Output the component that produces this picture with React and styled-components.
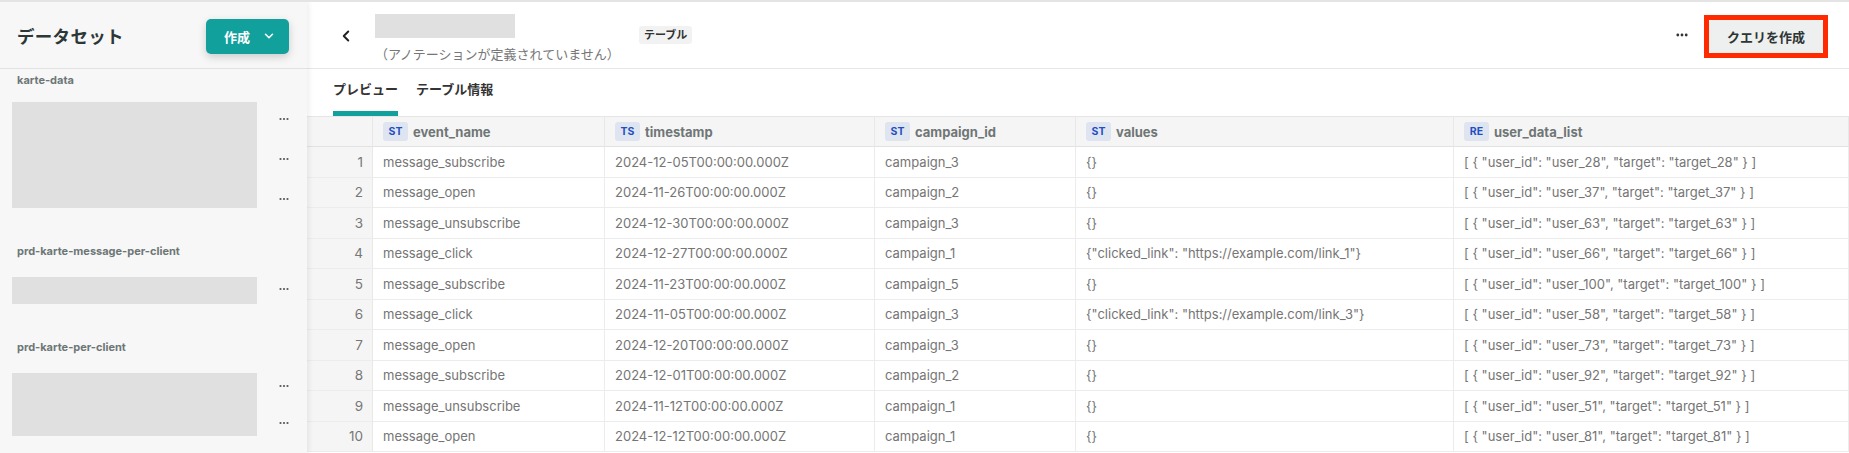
import React from "react";
import styled, { createGlobalStyle } from "styled-components";
import { ChevronLeft, ChevronDown } from "lucide-react";

const Global = createGlobalStyle`
  html, body { margin: 0; padding: 0; background: #fff; }
  body { font-family: Inter, "Noto Sans CJK JP", sans-serif; }
  * { box-sizing: border-box; }
`;

const Shell = styled.div`
  display: flex;
  width: 1849px;
  height: 453px;
  overflow: hidden;
  border-top: 2px solid #e4e4e4;
`;

const Sidebar = styled.aside`
  width: 307px;
  flex: none;
  background: #f7f7f7;
  box-shadow: 2px 0 5px rgba(0, 0, 0, 0.07);
  position: relative;
  z-index: 2;
  display: flex;
  flex-direction: column;
`;

const SideHeader = styled.div`
  height: 67px;
  display: flex;
  align-items: center;
  justify-content: space-between;
  padding: 0 18px 0 17px;
  border-bottom: 1px solid #e2e2e2;
`;

const SideTitle = styled.h1`
  margin: 0;
  font-size: 17.5px;
  font-weight: 700;
  color: #2c3838;
  letter-spacing: 0.3px;
`;

const CreateButton = styled.button`
  display: flex;
  align-items: center;
  gap: 12px;
  height: 35px;
  width: 83px;
  margin-top: 2px;
  padding: 0 0 0 18px;
  border: none;
  border-radius: 5px;
  background: #12a09c;
  color: #fff;
  font: 700 13px Inter, "Noto Sans CJK JP", sans-serif;
  box-shadow: 0 3px 8px rgba(0, 0, 0, 0.18);
`;

const SideBody = styled.div`
  padding: 3px 0 0 12px;
  display: flex;
  flex-direction: column;
  gap: 35px;
`;

const Group = styled.div`
  display: flex;
  flex-direction: column;
`;

const GroupLabel = styled.div`
  font-size: 11px;
  font-weight: 700;
  color: #6d7676;
  line-height: 16px;
  padding-left: 5px;
  margin-bottom: ${(p) => p.$gap}px;
`;

const GroupBody = styled.div`
  display: flex;
  align-items: flex-start;
`;

const Placeholder = styled.div`
  width: 245px;
  height: ${(p) => p.$h}px;
  background: #e0e0e0;
`;

const DotsList = styled.div`
  flex: 1;
  height: ${(p) => p.$h}px;
  margin-top: ${(p) => p.$offset}px;
  display: flex;
  flex-direction: column;
`;

const DotsItem = styled.div`
  flex: none;
  height: ${(p) => p.$h}px;
  display: flex;
  justify-content: center;
  align-items: center;
  padding-left: 4px;
`;

const Dots = ({ size = 10, color = "#555", r = 1.1 }) => (
  <svg width={size} height={4} viewBox={`0 0 ${size} 4`}>
    <circle cx={r + 0.4} cy={2} r={r} fill={color} />
    <circle cx={size / 2} cy={2} r={r} fill={color} />
    <circle cx={size - r - 0.4} cy={2} r={r} fill={color} />
  </svg>
);

const Main = styled.main`
  flex: 1;
  min-width: 0;
  display: flex;
  flex-direction: column;
  background: #fff;
`;

const MainHeader = styled.div`
  height: 67px;
  display: flex;
  align-items: center;
  padding: 0 26px 0 30px;
  border-bottom: 1px solid #e6e6e6;
`;

const BackButton = styled.button`
  border: none;
  background: none;
  padding: 0;
  width: 22px;
  display: flex;
  align-items: center;
  color: #222;
  margin-right: 16px;
  margin-top: 2px;
`;

const TitleBlock = styled.div`
  display: flex;
  flex-direction: column;
  gap: 9px;
  margin-top: 4px;
`;

const TitleSkeleton = styled.div`
  width: 140px;
  height: 24px;
  background: #e0e0e0;
`;

const Annotation = styled.div`
  font-size: 13px;
  color: #777;
  line-height: 14px;
  width: 258px;
`;

const TypeBadge = styled.span`
  margin-left: 6px;
  padding: 2px 5px;
  background: #f2f2f2;
  border-radius: 3px;
  font-size: 11px;
  font-weight: 700;
  color: #333;
  line-height: 14px;
`;

const Spacer = styled.div`
  flex: 1;
`;

const MoreButton = styled.button`
  border: none;
  background: none;
  padding: 0;
  margin-right: 16px;
  display: flex;
  align-items: center;
`;

const Highlight = styled.span`
  display: inline-flex;
  border: 5px solid #ff2a00;
  margin-top: 2px;
  margin-right: -5px;
`;

const QueryButton = styled.button`
  height: 33px;
  width: 114px;
  border: none;
  border-radius: 4px;
  background: #eef0f0;
  color: #2e3535;
  font: 700 13px Inter, "Noto Sans CJK JP", sans-serif;
`;

const Tabs = styled.div`
  height: 48px;
  display: flex;
  align-items: flex-end;
  gap: 18px;
  padding-left: 26px;
  border-bottom: 1px solid #e6e6e6;
`;

const Tab = styled.div`
  font-size: 13px;
  font-weight: 700;
  color: #333;
  padding-bottom: 13px;
  border-bottom: 5px solid ${(p) => (p.$active ? "#12a09c" : "transparent")};
  line-height: 17px;
`;

const Table = styled.div`
  display: grid;
  grid-template-columns: 66px 232px 270px 201px 378px 1fr;
  grid-auto-rows: 30.5px;
  grid-template-rows: 30px;
`;

const HeadCell = styled.div`
  background: #f5f5f5;
  border-bottom: 1px solid #e2e2e2;
  border-right: 1px solid #e8e8e8;
  display: flex;
  align-items: center;
  gap: 5px;
  padding-left: 10px;
  font-size: 13px;
  font-weight: 700;
  color: #6f7676;
`;

const KindBadge = styled.span`
  display: inline-flex;
  align-items: center;
  justify-content: center;
  width: 25px;
  height: 19px;
  border-radius: 3px;
  background: #dee5f1;
  color: #1f4fc0;
  font-size: 10.5px;
  font-weight: 700;
`;

const NumCell = styled.div`
  background: #f5f5f5;
  border-bottom: 1px solid #ececec;
  border-right: 1px solid #e8e8e8;
  display: flex;
  align-items: center;
  justify-content: flex-end;
  padding-right: 9px;
  font-size: 13.5px;
  color: #777;
`;

const Cell = styled.div`
  background: #fff;
  border-bottom: 1px solid #ececec;
  border-right: 1px solid #ececec;
  display: flex;
  align-items: center;
  padding-left: 10px;
  font-size: 13px;
  color: #757575;
  white-space: nowrap;
  overflow: hidden;
`;

const columns = [
  { kind: "ST", name: "event_name" },
  { kind: "TS", name: "timestamp" },
  { kind: "ST", name: "campaign_id" },
  { kind: "ST", name: "values" },
  { kind: "RE", name: "user_data_list" },
];

const link = (n) => `{"clicked_link": "https://example.com/link_${n}"}`;
const rows = [
  ["message_subscribe", "2024-12-05", "campaign_3", "{}", "28"],
  ["message_open", "2024-11-26", "campaign_2", "{}", "37"],
  ["message_unsubscribe", "2024-12-30", "campaign_3", "{}", "63"],
  ["message_click", "2024-12-27", "campaign_1", link(1), "66"],
  ["message_subscribe", "2024-11-23", "campaign_5", "{}", "100"],
  ["message_click", "2024-11-05", "campaign_3", link(3), "58"],
  ["message_open", "2024-12-20", "campaign_3", "{}", "73"],
  ["message_subscribe", "2024-12-01", "campaign_2", "{}", "92"],
  ["message_unsubscribe", "2024-11-12", "campaign_1", "{}", "51"],
  ["message_open", "2024-12-12", "campaign_1", "{}", "81"],
];

const groups = [
  { label: "karte-data", gap: 14, h: 106, items: 3, itemH: 40, offset: -3.5 },
  { label: "prd-karte-message-per-client", gap: 18, h: 27, items: 1, itemH: 39, offset: -8 },
  { label: "prd-karte-per-client", gap: 18, h: 63, items: 2, itemH: 37.5, offset: -6 },
];

export default function App() {
  return (
    <>
      <Global />
      <Shell>
        <Sidebar>
          <SideHeader>
            <SideTitle>データセット</SideTitle>
            <CreateButton>
              作成
              <ChevronDown size={14} strokeWidth={2.6} />
            </CreateButton>
          </SideHeader>
          <SideBody>
            {groups.map((g) => (
              <Group key={g.label}>
                <GroupLabel $gap={g.gap}>{g.label}</GroupLabel>
                <GroupBody>
                  <Placeholder $h={g.h} />
                  <DotsList $h={g.h} $offset={g.offset}>
                    {Array.from({ length: g.items }).map((_, i) => (
                      <DotsItem key={i} $h={g.itemH}>
                        <Dots />
                      </DotsItem>
                    ))}
                  </DotsList>
                </GroupBody>
              </Group>
            ))}
          </SideBody>
        </Sidebar>
        <Main>
          <MainHeader>
            <BackButton>
              <ChevronLeft size={18} strokeWidth={2.6} />
            </BackButton>
            <TitleBlock>
              <TitleSkeleton />
              <Annotation>（アノテーションが定義されていません）</Annotation>
            </TitleBlock>
            <TypeBadge>テーブル</TypeBadge>
            <Spacer />
            <MoreButton>
              <Dots size={12} color="#333" r={1.4} />
            </MoreButton>
            <Highlight>
              <QueryButton>クエリを作成</QueryButton>
            </Highlight>
          </MainHeader>
          <Tabs>
            <Tab $active>プレビュー</Tab>
            <Tab>テーブル情報</Tab>
          </Tabs>
          <Table>
            <HeadCell />
            {columns.map((c) => (
              <HeadCell key={c.name}>
                <KindBadge>{c.kind}</KindBadge>
                {c.name}
              </HeadCell>
            ))}
            {rows.map((r, i) => (
              <React.Fragment key={i}>
                <NumCell>{i + 1}</NumCell>
                <Cell>{r[0]}</Cell>
                <Cell>{r[1]}T00:00:00.000Z</Cell>
                <Cell>{r[2]}</Cell>
                <Cell>{r[3]}</Cell>
                <Cell>{`[ { "user_id": "user_${r[4]}", "target": "target_${r[4]}" } ]`}</Cell>
              </React.Fragment>
            ))}
          </Table>
        </Main>
      </Shell>
    </>
  );
}
